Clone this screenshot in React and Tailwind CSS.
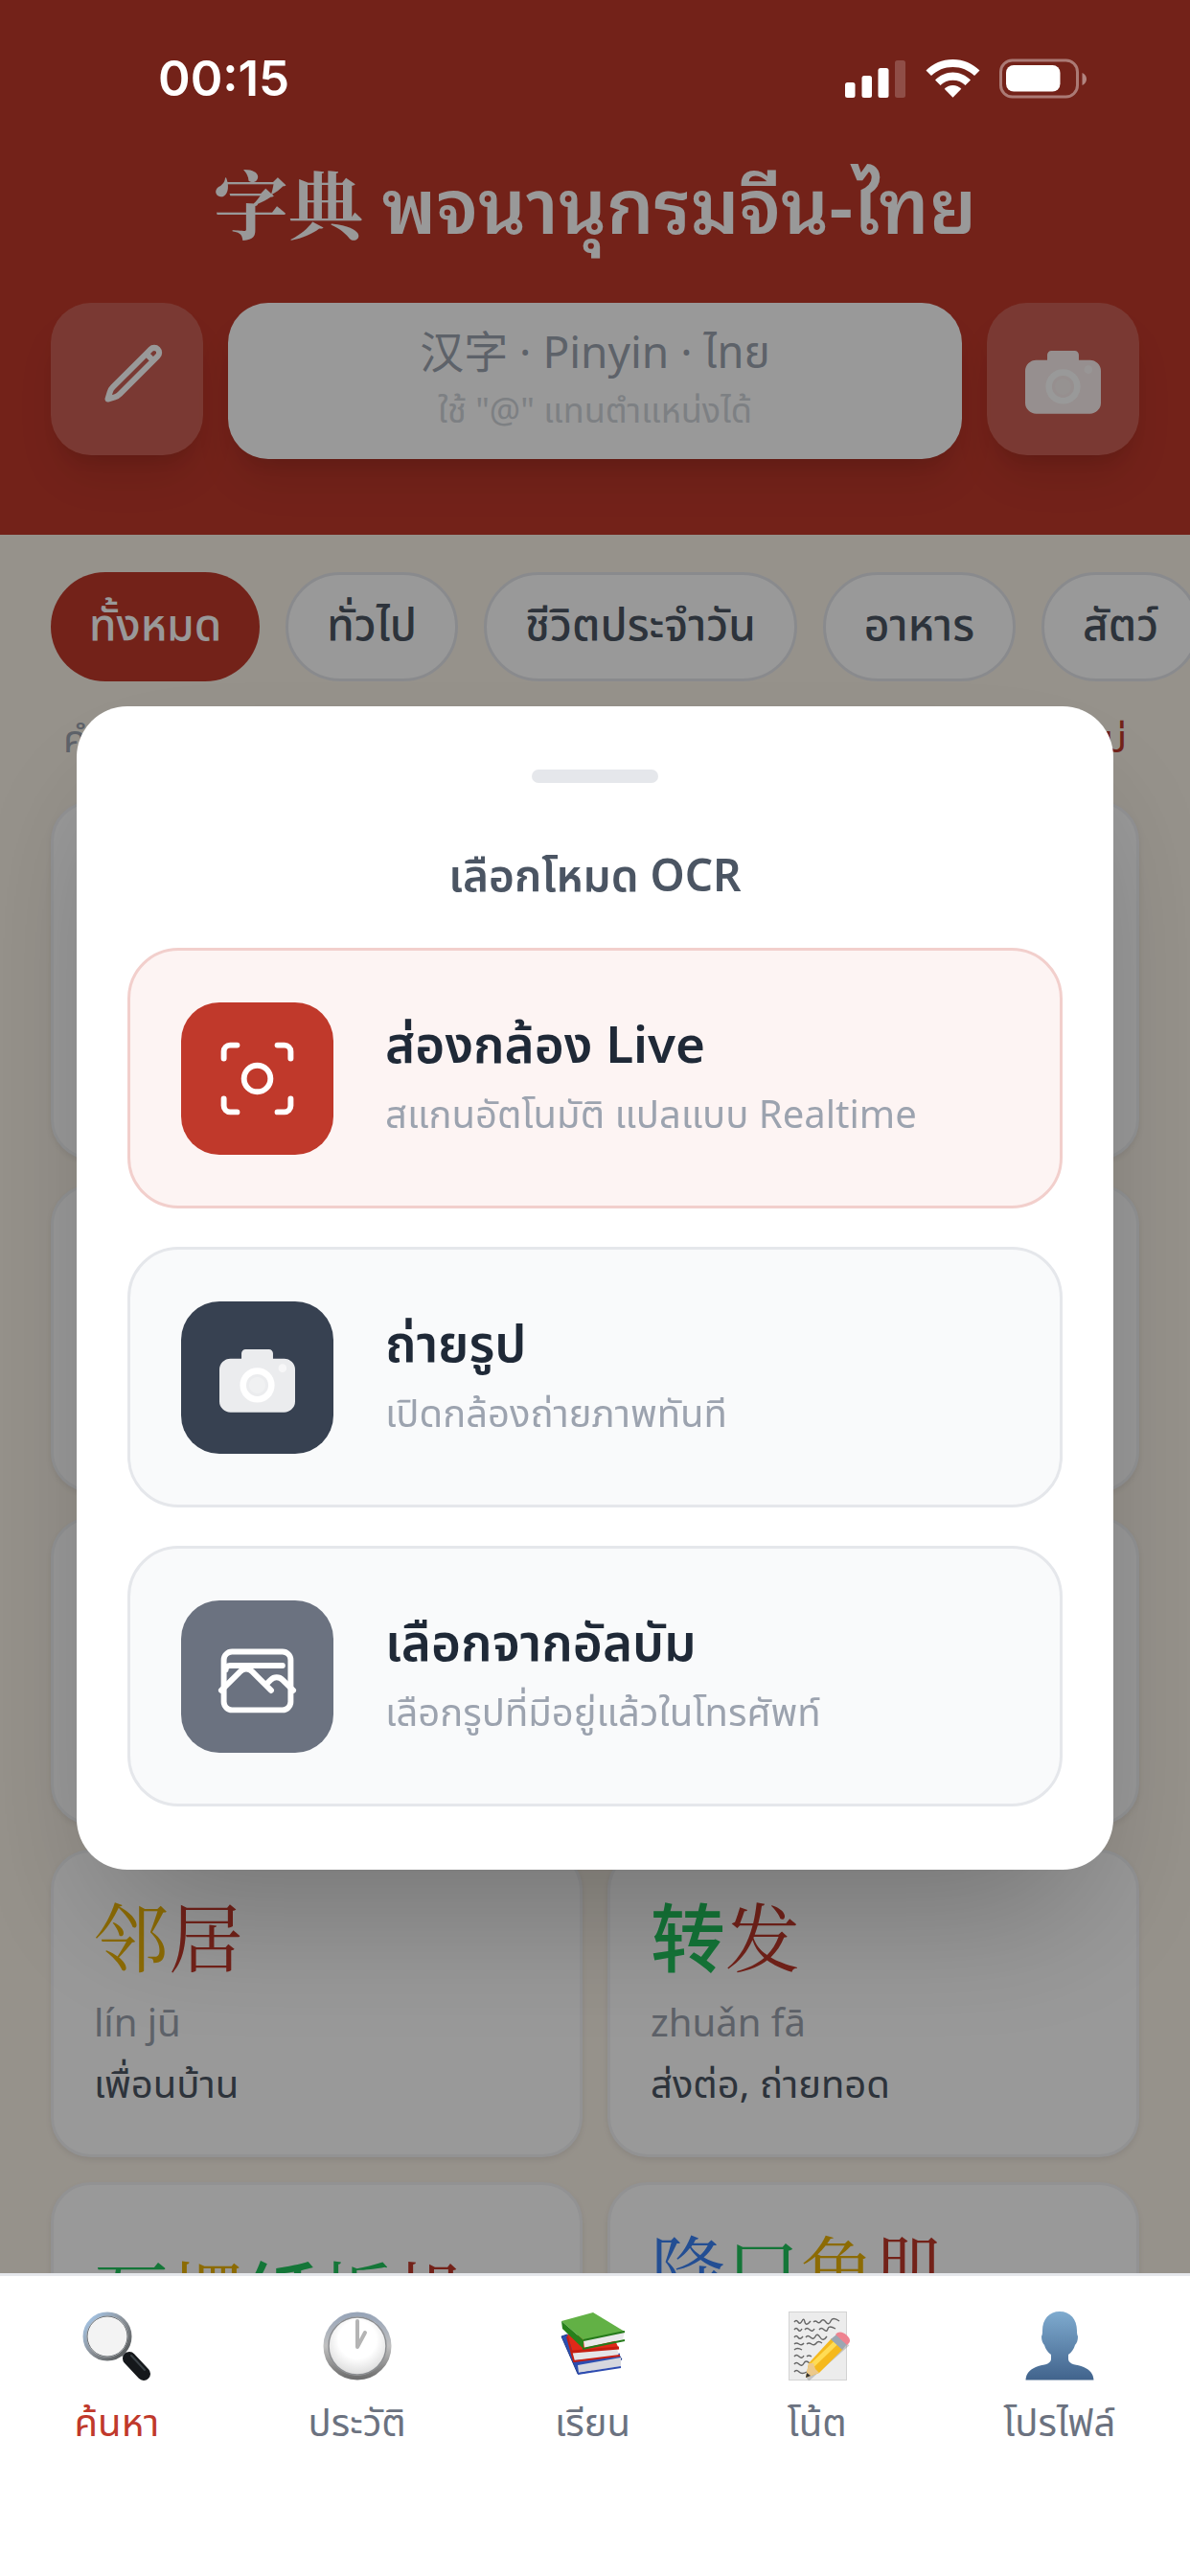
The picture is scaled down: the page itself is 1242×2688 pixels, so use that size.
import React, { useState } from "react";

const toneColors = {
  1: "text-[#c0392b]",
  2: "text-[#eab308]",
  3: "text-[#22c55e]",
  4: "text-[#3b82f6]",
};

const sansChars = ["转", "纸"];

const categories = ["ทั้งหมด", "ทั่วไป", "ชีวิตประจำวัน", "อาหาร", "สัตว์"];

const words = [
  { hanzi: [["学", 2], ["习", 2]], pinyin: "xué xí", thai: "เรียนรู้", note: "ศึกษา" },
  { hanzi: [["朋", 2], ["友", 3]], pinyin: "péng yǒu", thai: "เพื่อน" },
  { hanzi: [["天", 1], ["气", 4]], pinyin: "tiān qì", thai: "อากาศ" },
  { hanzi: [["高", 1], ["山", 1]], pinyin: "gāo shān", thai: "ภูเขาสูง" },
  { hanzi: [["水", 3], ["果", 3]], pinyin: "shuǐ guǒ", thai: "ผลไม้" },
  { hanzi: [["汽", 4], ["车", 1]], pinyin: "qì chē", thai: "รถยนต์" },
  { hanzi: [["邻", 2], ["居", 1]], pinyin: "lín jū", thai: "เพื่อนบ้าน" },
  { hanzi: [["转", 3], ["发", 1]], pinyin: "zhuǎn fā", thai: "ส่งต่อ, ถ่ายทอด" },
  {
    hanzi: [["瓦", 3], ["楞", 2], ["纸", 3], ["板", 3], ["机", 1]],
    pinyin: "wǎ léng zhǐ bǎn jī",
    thai: "เครื่องทำกระดาษลูกฟูก",
  },
  {
    hanzi: [["降", 4], ["口", 3], ["角", 2], ["肌", 1]],
    pinyin: "jiàng kǒu jué jī",
    thai: "กล้ามเนื้อดึงมุมปาก",
    note: "กายวิภาค",
  },
];

const StatusBar = () => (
  <div className="relative z-30 flex h-40 items-center justify-between pt-1 pl-[165px] pr-[106px]">
    <span className="font-['Inter',sans-serif] text-[51px] leading-[60px] font-semibold text-white">
      00:15
    </span>
    <svg className="h-[42px] w-[254px]" viewBox="0 0 254 42" fill="white" aria-hidden="true">
      <rect x="0" y="25" width="10.5" height="16" rx="2.5" />
      <rect x="17.5" y="18" width="10.5" height="23" rx="2.5" />
      <rect x="34.5" y="10" width="11" height="31" rx="2.5" />
      <rect x="52" y="2" width="11" height="39" rx="2.5" opacity="0.2" />
      <path d="M112.500 1C101.500 1 91.500 5.300 84.500 12.500L90 18C96 12.300 103.800 9 112.500 9C121 9 129 12.300 135 18L140.500 12.500C133 5.300 123.500 1 112.500 1Z" />
      <path d="M112.500 14.500C105.500 14.500 99 17.500 94 22.500L99.500 28C103 24.600 107.500 22.700 112.500 22.700C117.500 22.700 122 24.600 125.500 28L131 22.500C126 17.500 119.500 14.500 112.500 14.500Z" />
      <path d="M112.500 28C109 28 106 29.400 103.700 31.800L112.500 40.800L121.300 31.800C119 29.400 116 28 112.500 28Z" />
      <rect x="162.500" y="2" width="80" height="38" rx="12" fill="none" stroke="white" strokeWidth="3" opacity="0.4" />
      <rect x="168" y="7" width="56.500" height="27.500" rx="8" />
      <path d="M247.500 15C250 16 252 18.500 252 21.500C252 24.500 250 27 247.500 28Z" opacity="0.45" />
    </svg>
  </div>
);

const PencilIcon = () => (
  <svg
    className="h-[66px] w-[66px] overflow-visible"
    viewBox="-2.3 2.3 24 24"
    fill="none"
    stroke="white"
    strokeWidth="2.2"
    strokeLinecap="round"
    strokeLinejoin="round"
  >
    <path d="m16.862 4.487 1.687-1.688a1.875 1.875 0 1 1 2.652 2.652L6.832 19.820a4.500 4.500 0 0 1-1.897 1.130l-2.685.8.8-2.685a4.500 4.500 0 0 1 1.130-1.897L16.863 4.487Zm0 0L19.500 7.125" />
  </svg>
);

const CameraIcon = () => (
  <svg className="h-[79px] w-[79px]" viewBox="0 0 24 24" fill="white">
    <path
      d="M7 6V4.300A1.300 1.300 0 0 1 8.300 3h7.400A1.300 1.300 0 0 1 17 4.300V6h3.500A3.500 3.500 0 0 1 24 9.500v10a3.500 3.500 0 0 1-3.500 3.500h-17A3.500 3.500 0 0 1 0 19.500v-10A3.500 3.500 0 0 1 3.500 6Z"
      opacity="0.9"
    />
    <circle cx="12" cy="14.400" r="4.500" fill="none" stroke="white" strokeWidth="2" />
    <circle cx="12" cy="14.400" r="2.600" opacity="0.25" />
    <circle cx="20" cy="9" r="1.300" opacity="0.6" />
  </svg>
);

const ScanIcon = () => (
  <svg
    className="h-[79px] w-[79px]"
    viewBox="0 0 24 24"
    fill="none"
    stroke="white"
    strokeWidth="1.8"
    strokeLinecap="round"
    strokeLinejoin="round"
  >
    <path d="M1.400 5.600V3.400a2 2 0 0 1 2-2h2.200M18.400 1.400h2.200a2 2 0 0 1 2 2v2.200M22.600 18.400v2.200a2 2 0 0 1-2 2h-2.200M5.600 22.600H3.400a2 2 0 0 1-2-2v-2.200" />
    <circle cx="12" cy="12" r="4.200" />
  </svg>
);

const AlbumIcon = () => (
  <svg
    className="h-[79px] w-[79px] overflow-visible"
    viewBox="0 0 24 24"
    fill="none"
    stroke="white"
    strokeWidth="1.8"
    strokeLinecap="round"
    strokeLinejoin="round"
  >
    <rect x="1.400" y="4.100" width="21.200" height="18.500" rx="2.600" />
    <path d="M2 9.800C2 9 2.500 8.500 3.400 8.500H20" />
    <path
      strokeWidth="1.55"
      transform="translate(-2.040 -2.030) scale(1.170)"
      d="m2.250 15.750 5.159-5.159a2.250 2.250 0 0 1 3.182 0l5.159 5.159m-1.500-1.500 1.409-1.409a2.250 2.250 0 0 1 3.182 0l2.909 2.909"
    />
  </svg>
);

const SearchTabIcon = () => (
  <svg className="h-[72px] w-[72px]" viewBox="0 0 72 72">
    <defs>
      <linearGradient id="rim" x1="0" y1="0" x2="1" y2="1">
        <stop offset="0" stopColor="#a9cdf2" />
        <stop offset="0.5" stopColor="#8b9198" />
        <stop offset="1" stopColor="#4c4f4f" />
      </linearGradient>
    </defs>
    <path d="M42 43l6 6" stroke="#7a7f82" strokeWidth="6" />
    <path d="M49 49l15 16" stroke="#15181b" strokeWidth="14" strokeLinecap="round" />
    <path d="M51 46l14 15" stroke="#3b4247" strokeWidth="2" strokeLinecap="round" />
    <circle cx="26" cy="26" r="23.500" fill="#f3f3f3" stroke="url(#rim)" strokeWidth="4" />
    <circle cx="26" cy="26" r="21" fill="none" stroke="#666b70" strokeWidth="1" />
  </svg>
);

const HistoryTabIcon = () => (
  <svg className="h-[72px] w-[72px]" viewBox="0 0 72 72">
    <defs>
      <linearGradient id="clockRim" x1="0" y1="0" x2="0" y2="1">
        <stop offset="0" stopColor="#98a5b8" />
        <stop offset="0.5" stopColor="#c0c0c0" />
        <stop offset="1" stopColor="#6f6f6f" />
      </linearGradient>
      <radialGradient id="clockFace" cx="0.5" cy="0.4" r="0.6">
        <stop offset="0.5" stopColor="#ffffff" />
        <stop offset="1" stopColor="#d6d6d6" />
      </radialGradient>
    </defs>
    <circle cx="36" cy="36" r="33" fill="url(#clockFace)" stroke="url(#clockRim)" strokeWidth="5" />
    <circle cx="36" cy="36" r="30" fill="none" stroke="#8b8d90" strokeWidth="1.500" />
    <path d="M36 10v27l8-15" fill="none" stroke="#b4b4b4" strokeWidth="4" strokeLinecap="round" strokeLinejoin="round" />
  </svg>
);

const LearnTabIcon = () => (
  <svg className="h-[72px] w-[72px]" viewBox="0 0 72 72" strokeLinejoin="round">
    <path d="M3 26L20 65L27 64L66 50L62 44L9 24Z" fill="#2c4fb0" stroke="#20398a" />
    <path d="M20 56L65 48L65 57L21 64Z" fill="#d5d7de" />
    <path d="M17 54L64 45" stroke="#2d4bb0" strokeWidth="3" />
    <path d="M20 65L65 58" stroke="#2d4bb0" strokeWidth="2" />
    <path d="M9 24L15 43L63 39L58 28Z" fill="#e02a19" />
    <path d="M14 43L61 38L63 47L16 51Z" fill="#e5e5e7" />
    <path d="M9 26L16 52L64 46" fill="none" stroke="#c51d10" strokeWidth="2" />
    <path d="M14 42L63 38" stroke="#c51d10" strokeWidth="3" />
    <path d="M3 10L36 1L69 21L26 30Z" fill="#62b145" />
    <path d="M3 10L26 30V39L4 18Z" fill="#27811b" />
    <path d="M26 30L69 21L67 29L27 38Z" fill="#e9e9ea" />
    <path d="M26 30L69 21M25 39L69 30" fill="none" stroke="#257a1b" strokeWidth="2" />
  </svg>
);

const NoteTabIcon = () => (
  <svg className="h-[72px] w-[72px]" viewBox="0 0 72 72">
    <rect x="6.500" y="0.500" width="60" height="71" fill="#ececec" stroke="#d3d3d3" />
    <path
      d="M12 11q2-3 4 0t4-1t3 1t6-1M32 11q2-2 4 0t4-1t5 1t5-1t9 0M12 19q2-3 4 0t4-1M23 19q2-3 5 0t5-1M38 19q2-3 5 0t4-1t8 0M12 27q2-3 4 0t5-1M24 27q2-3 5 0t5-1t5 1t7-1M12 34q2-2 5 0t5-1M25 34q2-2 5 0t5-1t6 0M12 40q3-3 8 0M12 47q2-3 5 0t5-1M25 47q2-2 5 0M12 55q2-3 5 0t5-1t6 0M12 63q2-3 5 0t8 0"
      fill="none"
      stroke="#666"
      strokeWidth="1.4"
    />
    <path d="M26 71L68 34" stroke="#777" strokeWidth="4" opacity="0.35" />
    <path d="M24 69L27 54L51 28L63 39L38 64Z" fill="#f5b91d" />
    <path d="M31 56L56 32" stroke="#ffdc55" strokeWidth="5" />
    <path d="M24 69L27 54L32 54L34 60L38 64Z" fill="#ecc98b" />
    <path d="M24 69L25 64L29 67Z" fill="#333" />
    <path d="M50 29L56 24L67 34L62 40Z" fill="#9ba7b2" />
    <path d="M55 24C58 20 63 21 67 25C71 29 71 32 67 35Z" fill="#ee8390" />
  </svg>
);

const ProfileTabIcon = () => (
  <svg className="h-[72px] w-[72px]" viewBox="0 0 72 72">
    <defs>
      <linearGradient id="bust" x1="0" y1="0" x2="0" y2="1">
        <stop offset="0" stopColor="#7fabcf" />
        <stop offset="1" stopColor="#41638c" />
      </linearGradient>
    </defs>
    <path
      d="M36 0C47 0 54 8 54 20C54 22 54 24 55 26C55 30 54 33 52 35C51 39 48 43 45 45V50C46 56 54 55 61 58C68 61 71 65 71.500 71.500H0.500C1 65 4 61 11 58C18 55 26 56 27 50V45C24 43 21 39 20 35C18 33 17 30 17 26C18 24 18 22 18 20C18 8 25 0 36 0Z"
      fill="url(#bust)"
    />
  </svg>
);

const tabs = [
  { label: "ค้นหา", icon: <SearchTabIcon /> },
  { label: "ประวัติ", icon: <HistoryTabIcon /> },
  { label: "เรียน", icon: <LearnTabIcon /> },
  { label: "โน้ต", icon: <NoteTabIcon /> },
  { label: "โปรไฟล์", icon: <ProfileTabIcon /> },
];

const modes = [
  {
    title: "ส่องกล้อง Live",
    desc: "สแกนอัตโนมัติ แปลแบบ Realtime",
    icon: <ScanIcon />,
    card: "border-[#f2cfcc] bg-[#fdf4f3]",
    tile: "bg-[#c0392b]",
  },
  {
    title: "ถ่ายรูป",
    desc: "เปิดกล้องถ่ายภาพทันที",
    icon: <CameraIcon />,
    card: "border-[#e5e7eb] bg-[#f9fafb]",
    tile: "bg-[#374151]",
  },
  {
    title: "เลือกจากอัลบัม",
    desc: "เลือกรูปที่มีอยู่แล้วในโทรศัพท์",
    icon: <AlbumIcon />,
    card: "border-[#e5e7eb] bg-[#f9fafb]",
    tile: "bg-[#6b7280]",
  },
];

const WordCard = ({ word }) => (
  <button className="flex flex-col justify-center rounded-[42px] border-3 border-[#f3f4f6] bg-white px-[42px] pt-[38px] pb-[44px] text-left shadow-[0_3px_6px_rgba(0,0,0,0.08)]">
    <span className="font-['Noto_Serif_CJK_SC','Noto_Sans_CJK_SC',serif] text-[78px] leading-[95px]">
      {word.hanzi.map(([char, tone], index) => (
        <span
          key={index}
          className={`${toneColors[tone]} ${
            sansChars.includes(char) ? "font-['Noto_Sans_CJK_SC',sans-serif] leading-none font-medium" : ""
          }`}
        >
          {char}
        </span>
      ))}
    </span>
    <span className="mt-[17px] text-[40px] leading-[53px] text-[#9ca3af]">{word.pinyin}</span>
    <span className="mt-2 text-[40px] leading-[60px] text-[#4b5563]">{word.thai}</span>
    {word.note && (
      <span className="text-[40px] leading-[53px] text-[#4b5563]">{word.note}</span>
    )}
  </button>
);

const App = () => {
  const [activeCategory, setActiveCategory] = useState("ทั้งหมด");
  const [activeTab, setActiveTab] = useState("ค้นหา");
  const [query, setQuery] = useState("");

  return (
    <div className="flex h-screen flex-col overflow-hidden bg-[#faf3e8] font-['Noto_Sans','Noto_Sans_Thai','Noto_Sans_CJK_SC',sans-serif]">
      <header className="bg-[#c0392b] pb-[79px]">
        <StatusBar />
        <h1 className="mb-[56px] text-center font-['Noto_Serif_CJK_SC','Noto_Sans_Thai_Looped','Noto_Sans_CJK_SC',serif] text-[78px] leading-[100px] font-semibold text-white">
          <span className="font-bold">字典</span> พจนานุกรมจีน
          <span className="font-['Noto_Sans_Thai_Looped','Noto_Sans',sans-serif] leading-none">-</span>ไทย
        </h1>
        <div className="flex items-start gap-[26px] px-[53px]">
          <button
            aria-label="เขียน"
            className="flex h-[159px] w-[159px] shrink-0 items-center justify-center rounded-[42px] bg-white/20 shadow-[0_30px_45px_-9px_rgba(0,0,0,0.1),0_12px_18px_-9px_rgba(0,0,0,0.1)]"
          >
            <PencilIcon />
          </button>
          <label className="relative flex h-[163px] min-w-0 flex-1 flex-col items-center justify-center gap-1 rounded-[42px] bg-white pb-1.5 shadow-[0_30px_45px_-9px_rgba(0,0,0,0.1),0_12px_18px_-9px_rgba(0,0,0,0.1)]">
            {!query && (
              <>
                <span className="text-[46px] leading-[62px] text-[#9ca3af]">
                  汉字 · Pinyin · ไทย
                </span>
                <span className="text-[36px] leading-[54px] text-[#d1d5db]">
                  ใช้ "@" แทนตำแหน่งได้
                </span>
              </>
            )}
            <input
              type="text"
              value={query}
              onChange={(e) => setQuery(e.target.value)}
              className="absolute inset-0 w-full rounded-[42px] bg-transparent text-center text-[46px] outline-none"
            />
          </label>
          <button
            aria-label="กล้อง"
            className="flex h-[159px] w-[159px] shrink-0 items-center justify-center rounded-[42px] bg-white/20 shadow-[0_30px_45px_-9px_rgba(0,0,0,0.1),0_12px_18px_-9px_rgba(0,0,0,0.1)]"
          >
            <CameraIcon />
          </button>
        </div>
      </header>

      <main className="min-h-0 flex-1 overflow-hidden">
        <div className="flex gap-[27px] overflow-hidden px-[53px] pt-[39px]">
          {categories.map((category) => (
            <button
              key={category}
              onClick={() => setActiveCategory(category)}
              className={`h-[114px] shrink-0 rounded-full px-10 pb-2 text-[46px] leading-[66px] font-medium ${
                category === activeCategory
                  ? "bg-[#c0392b] text-white"
                  : "border-3 border-[#e5e7eb] bg-white text-[#4b5563]"
              }`}
            >
              {category}
            </button>
          ))}
        </div>
        <div className="flex justify-between px-[66px] pt-8 pb-10 text-[40px] leading-[53px]">
          <span className="text-[#9ca3af]">คำศัพท์</span>
          <button className="text-[#c0392b]">สุ่มใหม่</button>
        </div>
        <div className="grid grid-cols-2 gap-[26px] px-[53px]">
          {words.map((word) => (
            <WordCard key={word.pinyin} word={word} />
          ))}
        </div>
      </main>

      <div className="fixed inset-0 z-20 flex items-center justify-center bg-black/40 px-20">
        <div
          role="dialog"
          aria-labelledby="ocr-title"
          className="flex w-full flex-col items-center rounded-[53px] bg-white px-[53px] pt-[66px] pb-[66px] shadow-[0_75px_150px_-36px_rgba(0,0,0,0.25)]"
        >
          <div className="h-[14px] w-[132px] rounded-full bg-[#e5e7eb]" />
          <h2
            id="ocr-title"
            className="mt-[62px] mb-11 text-[46px] leading-[66px] font-semibold text-[#4b5563]"
          >
            เลือกโหมด OCR
          </h2>
          <div className="flex w-full flex-col gap-10">
            {modes.map((mode) => (
              <button
                key={mode.title}
                className={`flex h-[272px] w-full items-center gap-[54px] rounded-[53px] border-3 px-[53px] text-left ${mode.card}`}
              >
                <span
                  className={`flex h-[159px] w-[159px] shrink-0 items-center justify-center rounded-[40px] ${mode.tile}`}
                >
                  {mode.icon}
                </span>
                <span className="flex flex-col pb-2.5">
                  <span className="text-[53px] leading-[79px] font-semibold text-[#1f2937]">
                    {mode.title}
                  </span>
                  <span className="mt-1 text-[40px] leading-[60px] text-[#9ca3af]">
                    {mode.desc}
                  </span>
                </span>
              </button>
            ))}
          </div>
        </div>
      </div>

      <nav className="relative z-30 flex justify-around border-t-3 border-[#e5e7eb] bg-white pt-[37px] pb-[135px]">
        {tabs.map((tab) => (
          <button
            key={tab.label}
            onClick={() => setActiveTab(tab.label)}
            className={`flex min-w-[79px] flex-col items-center gap-4 text-[40px] leading-[53px] ${
              tab.label === activeTab ? "text-[#c0392b]" : "text-[#6b7280]"
            }`}
          >
            {tab.icon}
            {tab.label}
          </button>
        ))}
      </nav>
    </div>
  );
};

export default App;
